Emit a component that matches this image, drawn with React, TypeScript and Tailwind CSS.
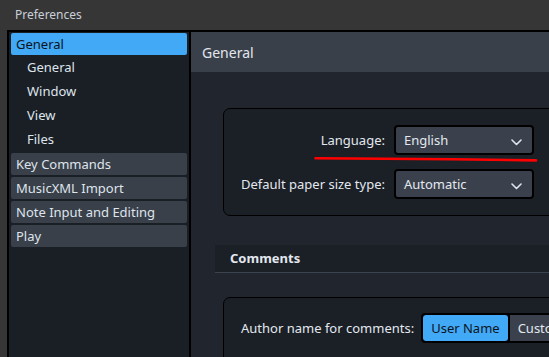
import React from "react";

const font = { fontFamily: '"Noto Sans", "Open Sans", sans-serif' };

function Chevron() {
  return (
    <svg width="11" height="7" viewBox="0 0 11 7" className="mt-[2px] shrink-0">
      <polyline points="1,1 5.5,5.5 10,1" fill="none" stroke="#dfe5ee" strokeWidth="1.6" strokeLinecap="round" strokeLinejoin="round" />
    </svg>
  );
}

function Dropdown({ value }: { value: string }) {
  return (
    <div className="flex h-[30px] w-[140px] items-center justify-between rounded-[4px] border-2 border-black bg-[#3a414c] pl-[8px] pr-[10px] pt-[2px] text-[13px] text-[#e3e8ef]">
      <span>{value}</span>
      <Chevron />
    </div>
  );
}

export default function App() {
  return (
    <div className="flex h-[357px] w-[549px] flex-col overflow-hidden bg-[#363636]" style={font}>
      <div className="flex h-[30px] shrink-0 items-center pl-[15px] text-[12px] text-[#c9cfd9]">Preferences</div>
      <div className="ml-[7px] flex min-h-0 flex-1 border-l-2 border-t-2 border-black">
        {/* Sidebar */}
        <div className="flex w-[180px] shrink-0 flex-col gap-[2px] bg-[#1a1f26] px-[2px] pt-[1px] text-[13px] text-[#dfe4ec]">
          <div className="flex h-[22px] items-center rounded-[2px] bg-[#42a9f7] pl-[5px] pt-px text-[#0b1420]">General</div>
          <div className="-mt-[2px] flex flex-col">
            {["General", "Window", "View", "Files"].map((t) => (
              <div key={t} className="flex h-[24px] items-center pl-[16px] pt-px">{t}</div>
            ))}
          </div>
          {["Key Commands", "MusicXML Import", "Note Input and Editing", "Play"].map((t) => (
            <div key={t} className="flex h-[22px] items-center rounded-[2px] bg-[#39404a] pl-[5px] pt-px">{t}</div>
          ))}
        </div>
        {/* Divider */}
        <div className="w-[2px] shrink-0 bg-black" />
        {/* Right panel */}
        <div className="relative flex min-w-0 flex-1 flex-col bg-[#21262e]">
          <div className="flex h-[40px] shrink-0 items-center bg-[#39404a] pl-[11px] pt-px text-[14px] text-[#e1e6ee]">General</div>
          <div className="flex w-[420px] flex-col pl-[24px] pt-[36px]">
            <div className="ml-[8px] rounded-[7px] border-[1.5px] border-black bg-[#1b1f26] py-[16px] pl-[17px]">
              <div className="grid grid-cols-[auto_auto] items-center justify-start gap-x-[9px] gap-y-[14px] text-[13px] text-[#e3e8ef]">
                <div className="pt-[2px] text-right">Language:</div>
                <Dropdown value="English" />
                <div className="pt-[2px] text-right">Default paper size type:</div>
                <Dropdown value="Automatic" />
              </div>
            </div>
            <div className="mt-[29px] flex h-[28px] items-center border-b border-[#3b434e] bg-[#1b1f26] pl-[15px] pt-px text-[13px] font-bold text-[#e3e8ef]">
              Comments
            </div>
            <div className="ml-[8px] mt-[24px] h-[80px] rounded-[7px] border-[1.5px] border-black bg-[#1b1f26] pl-[17px] pt-[15px]">
              <div className="flex items-center gap-[7px] text-[13px] text-[#e3e8ef]">
                <span className="pt-[2px]">Author name for comments:</span>
                <div className="flex h-[30px] overflow-hidden rounded-[4px] border-2 border-black bg-black">
                  <div className="flex items-center rounded-[3px] bg-[#42a9f7] px-[8px] pt-[2px] text-[#0b1420]">User Name</div>
                  <div className="ml-[2px] flex items-center bg-[#3a414c] px-[8px] pt-[2px]">Custom</div>
                </div>
              </div>
            </div>
          </div>
          <svg className="absolute left-[123px] top-[124px]" width="228" height="8" viewBox="0 0 228 8">
            <path d="M1.5 2.2 C 60 2.6, 150 3.2, 222 4.4" fill="none" stroke="#ff0000" strokeWidth="2.6" strokeLinecap="round" />
          </svg>
        </div>
      </div>
    </div>
  );
}
